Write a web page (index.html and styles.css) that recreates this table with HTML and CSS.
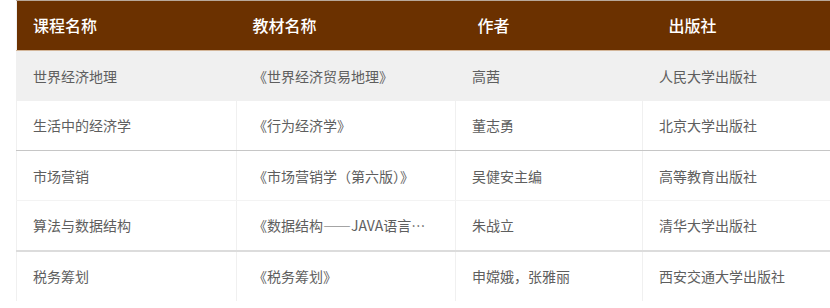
FILE: index.html
```html
<!DOCTYPE html>
<html lang="zh">
<head>
<meta charset="utf-8">
<link rel="stylesheet" href="styles.css">
</head>
<body>
<div class="wrap">
<table class="books">
<colgroup>
<col class="c1"><col class="c2"><col class="c3"><col class="c4">
</colgroup>
<thead>
<tr>
<th>课程名称</th>
<th>教材名称</th>
<th class="h3">作者</th>
<th class="h4">出版社</th>
</tr>
</thead>
<tbody>
<tr class="odd line-none">
<td>世界经济地理</td><td>《世界经济贸易地理》</td><td>高茜</td><td>人民大学出版社</td>
</tr>
<tr class="line-dark">
<td>生活中的经济学</td><td>《行为经济学》</td><td>董志勇</td><td>北京大学出版社</td>
</tr>
<tr class="line-light">
<td>市场营销</td><td>《市场营销学（第六版）》</td><td>吴健安主编</td><td>高等教育出版社</td>
</tr>
<tr class="line-mid">
<td>算法与数据结构</td><td class="clip">《数据结构——JAVA语言描述》</td><td>朱战立</td><td>清华大学出版社</td>
</tr>
<tr>
<td>税务筹划</td><td>《税务筹划》</td><td>申嫦娥，张雅丽</td><td>西安交通大学出版社</td>
</tr>
</tbody>
</table>
</div>
</body>
</html>
```

FILE: styles.css
```css
html, body {
  margin: 0;
  padding: 0;
  background: #ffffff;
  overflow: hidden;
}
body {
  font-family: "Noto Sans CJK SC", "Noto Sans", "Liberation Sans", sans-serif;
}
.wrap {
  padding-left: 16px;
}
.books {
  border-collapse: collapse;
  table-layout: fixed;
  width: 814px;
  border-top: 1px solid #b8a89a;
  border-left: 1px solid #f0f0f0;
}
.c1 { width: 220px; }
.c2 { width: 219px; }
.c3 { width: 187px; }
.c4 { width: 188px; }
.books th {
  background: #6b3100;
  color: #ffffff;
  font-size: 16px;
  font-weight: 500;
  text-align: left;
  height: 50px;
  padding: 0 0 2px 16px;
  border-bottom: 1px solid #d3b69a;
  box-sizing: border-box;
}
.books th.h3 { padding-left: 22px; }
.books th.h4 { padding-left: 26px; }
.books td {
  height: 50px;
  padding: 0 20px 0 16px;
  font-size: 14px;
  color: #5e5e5e;
  border-left: 1px solid #f0f0f0;
  white-space: nowrap;
  overflow: hidden;
  text-overflow: ellipsis;
  box-sizing: border-box;
}
.books td:first-child { border-left: none; }
.odd td { background: #f0f0f0; }
.line-none td { border-bottom: none; }
.line-dark td { border-bottom: 1px solid #c6c6c6; }
.line-light td { border-bottom: 1px solid #f3f3f3; }
.line-mid td { border-bottom: 2px solid #dcdcdc; }
```
